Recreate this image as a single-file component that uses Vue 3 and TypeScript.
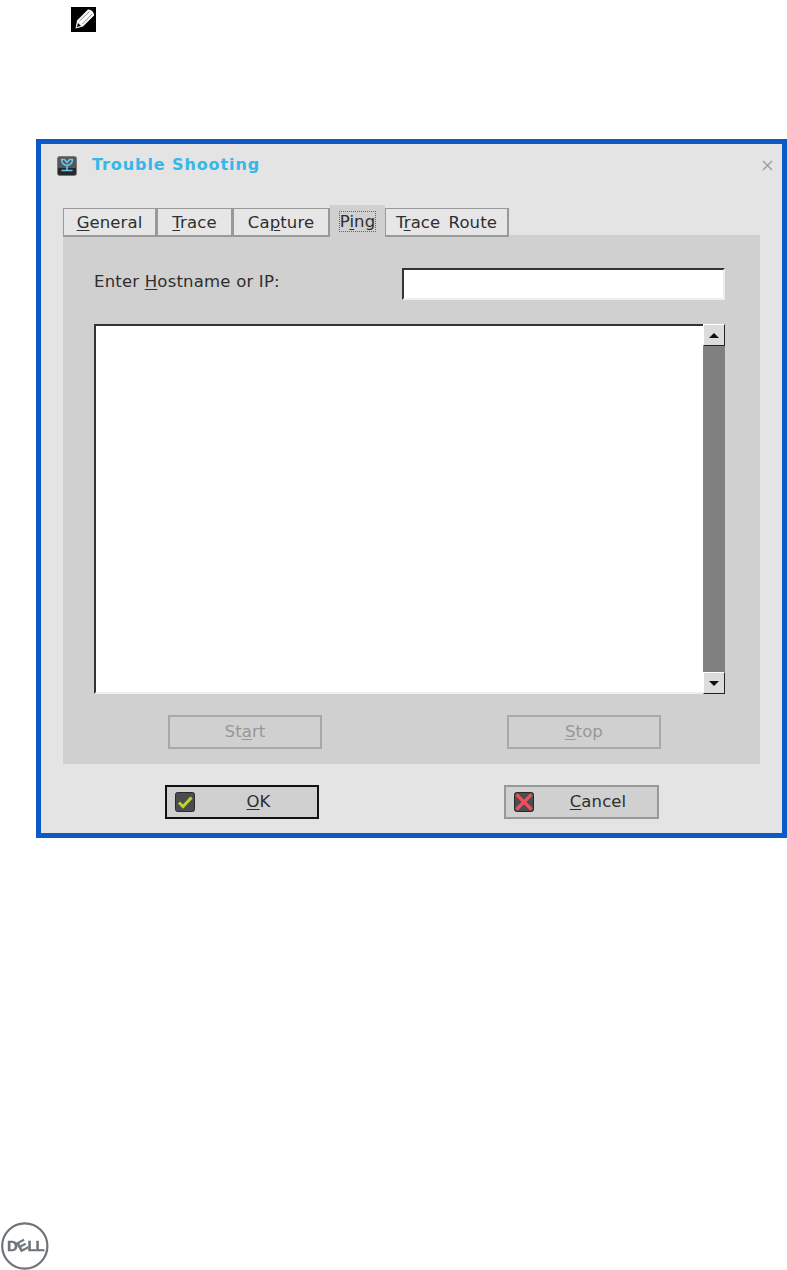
<script setup lang="ts">
interface Tab {
  before: string
  key: string
  after: string
  width: number
  active?: boolean
}

const tabs: Tab[] = [
  { before: '', key: 'G', after: 'eneral', width: 94 },
  { before: '', key: 'T', after: 'race', width: 76 },
  { before: 'Ca', key: 'p', after: 'ture', width: 97 },
  { before: 'P', key: 'i', after: 'ng', width: 55, active: true },
  { before: 'T', key: 'r', after: 'ace Route', width: 124 },
]
</script>

<template>
  <div class="page">
    <div class="note-row">
      <svg class="note-icon" width="25" height="25" viewBox="0 0 25 25">
        <rect width="25" height="25" fill="#000" />
        <path d="M4.5 21.5 L6 13.5 L17 2.5 C20 2 23.5 5.5 23 8.5 L12 19.5 Z" fill="#fff" />
        <path d="M8.5 14 L18.5 4.5 M11.5 17 L21 7" stroke="#8a8a8a" stroke-width="1" />
        <path d="M5.5 20.5 L6.8 15.5 L10.5 19 Z" fill="#000" stroke="#fff" stroke-width="0.6" />
      </svg>
    </div>

    <div class="dialog">
      <div class="titlebar">
        <svg class="app-icon" width="20" height="20" viewBox="0 0 20 20">
          <rect x="0.5" y="0.5" width="19" height="19" rx="2" fill="#55585a" stroke="#777" />
          <path d="M1 12 H19 V17 a2 2 0 0 1 -2 2 H3 a2 2 0 0 1 -2 -2 Z" fill="#26282a" />
          <path d="M4.5 3.5 L7.5 3.5 L10 6.5 L12.5 3.5 L15.5 3.5 C15.5 7 13 9 10 9.5 C7 9 4.5 7 4.5 3.5 Z" fill="none" stroke="#67c6ea" stroke-width="1.5" />
          <path d="M10 9 V14 M4.5 14.5 H15.5" stroke="#67c6ea" stroke-width="1.6" fill="none" />
        </svg>
        <span class="title">Trouble Shooting</span>
        <svg class="close" width="11" height="11" viewBox="0 0 11 11">
          <path d="M1 1 L10 10 M10 1 L1 10" stroke="#9a9a9a" stroke-width="1.4" />
        </svg>
      </div>

      <div class="tabs">
        <div
          v-for="tab in tabs"
          :key="tab.width"
          class="tab"
          :class="{ active: tab.active }"
          :style="{ width: tab.width + 'px' }"
        >
          <span class="tab-label">{{ tab.before }}<u>{{ tab.key }}</u>{{ tab.after }}</span>
        </div>
      </div>

      <div class="panel">
        <div class="host-row">
          <label class="host-label">Enter <u>H</u>ostname or IP:</label>
          <div class="sunken host-input"></div>
        </div>

        <div class="output">
          <div class="sunken output-text"></div>
          <div class="scrollbar">
            <div class="arrow-btn"><span class="arrow up"></span></div>
            <div class="track"></div>
            <div class="arrow-btn"><span class="arrow down"></span></div>
          </div>
        </div>

        <div class="actions">
          <div class="btn disabled">St<u>a</u>rt</div>
          <div class="btn disabled"><u>S</u>top</div>
        </div>
      </div>

      <div class="footer">
        <div class="btn main default">
          <svg class="btn-icon" width="20" height="20" viewBox="0 0 20 20">
            <rect x="0.5" y="0.5" width="19" height="19" rx="2" fill="#4a4c4e" stroke="#2a2a2a" />
            <path d="M4 10.5 L8 14.5 L16.5 5.5" fill="none" stroke="#b8d62c" stroke-width="3" />
          </svg>
          <span class="btn-text"><u>O</u>K</span>
        </div>
        <div class="btn main">
          <svg class="btn-icon" width="20" height="20" viewBox="0 0 20 20">
            <rect x="0.5" y="0.5" width="19" height="19" rx="2" fill="#4a4c4e" stroke="#2a2a2a" />
            <path d="M2.5 2.5 L17.5 17.5 M17.5 2.5 L2.5 17.5" fill="none" stroke="#f04f5c" stroke-width="3.2" />
          </svg>
          <span class="btn-text"><u>C</u>ancel</span>
        </div>
      </div>
    </div>

    <svg class="dell" width="50" height="48" viewBox="0 0 50 48">
      <circle cx="24.8" cy="24" r="22.6" fill="none" stroke="#6f7479" stroke-width="2.2" />
      <g class="dell-text" fill="#6f7479" stroke="#6f7479" stroke-width="0.4">
        <text x="7" y="29">D</text>
        <text x="17.5" y="29" transform="rotate(-28 22 24)">E</text>
        <text x="27.5" y="29">L</text>
        <text x="35.5" y="29">L</text>
      </g>
    </svg>
  </div>
</template>

<style>
html,
body {
  margin: 0;
  background: #fff;
}
</style>

<style scoped>
.page {
  width: 787px;
  height: 1270px;
  display: flex;
  flex-direction: column;
  overflow: hidden;
  box-sizing: border-box;
  font-family: "DejaVu Sans", sans-serif;
  font-size: 16.5px;
  letter-spacing: 0.1px;
  color: #2e2e2e;
  filter: blur(0.4px);
}

.note-row {
  height: 139px;
  padding: 7px 0 0 71px;
  box-sizing: border-box;
}

.note-icon {
  display: block;
}

.dialog {
  width: 751px;
  height: 699px;
  margin-left: 36px;
  box-sizing: border-box;
  border: 5px solid #0c59c8;
  background: #e4e4e4;
}

.titlebar {
  height: 61px;
  display: flex;
  align-items: flex-start;
  padding: 12px 9px 0 16px;
  box-sizing: border-box;
}

.app-icon {
  flex: none;
}

.title {
  margin-left: 15px;
  font-size: 16px;
  line-height: 18px;
  font-weight: bold;
  letter-spacing: 0.9px;
  color: #35b7ea;
}

.close {
  margin: 4px 0 0 auto;
}

.tabs {
  display: flex;
  align-items: flex-end;
  height: 32px;
  margin-left: 22px;
  position: relative;
  z-index: 1;
}

.tab {
  height: 29px;
  box-sizing: border-box;
  display: flex;
  align-items: center;
  justify-content: center;
  background: #e6e6e6;
  border: 2px solid #999;
  border-width: 1px 2px 2px 1px;
  white-space: nowrap;
  word-spacing: 3px;
}

.tab.active {
  height: 32px;
  background: #d0d0d0;
  border: none;
}

.tab.active .tab-label {
  outline: 1px dotted #666;
  line-height: 19px;
}

.panel {
  width: 697px;
  height: 529px;
  margin: -2px 0 0 22px;
  padding: 33px 35px 0 31px;
  box-sizing: border-box;
  background: #d0d0d0;
}

.host-row {
  display: flex;
  align-items: center;
  justify-content: space-between;
  height: 32px;
}

.host-label {
  padding-bottom: 6px;
  letter-spacing: 0.2px;
}

.sunken {
  box-sizing: border-box;
  background: #fff;
  border-style: solid;
  border-width: 2px 2px 2px 2px;
  border-color: #333 #eee #eee #333;
}

.host-input {
  width: 323px;
  height: 32px;
}

.output {
  display: flex;
  height: 370px;
  margin-top: 24px;
}

.output-text {
  flex: 1;
  border-right: none;
}

.scrollbar {
  width: 22px;
  display: flex;
  flex-direction: column;
}

.arrow-btn {
  height: 22px;
  box-sizing: border-box;
  display: flex;
  align-items: center;
  justify-content: center;
  background: #dcdcdc;
  border: 1px solid;
  border-color: #fff #222 #222 #fff;
}

.arrow {
  width: 0;
  height: 0;
  border-left: 5px solid transparent;
  border-right: 5px solid transparent;
}

.arrow.up {
  border-bottom: 5px solid #111;
}

.arrow.down {
  border-top: 5px solid #111;
}

.track {
  flex: 1;
  background: #808080;
}

.actions {
  display: flex;
  justify-content: space-between;
  margin: 21px 64px 0 74px;
}

.btn {
  width: 154px;
  height: 34px;
  box-sizing: border-box;
  display: flex;
  align-items: center;
  justify-content: center;
  padding-bottom: 2px;
  border: 2px solid #999;
  background: #d0d0d0;
}

.btn.disabled {
  color: #979797;
  border-color: #a8a8a8;
}

.footer {
  display: flex;
  justify-content: space-between;
  margin: 21px 0 0 124px;
  width: 494px;
}

.btn.main {
  position: relative;
  color: #2e2e2e;
}

.btn.main:last-child {
  width: 155px;
}

.btn.default {
  border-color: #111;
}

.btn-icon {
  position: absolute;
  left: 8px;
  top: 5px;
}

.btn-text {
  margin-left: 33px;
}

.dell {
  display: block;
  margin: auto 0 0 0;
  flex: none;
}

.dell-text {
  font-family: "Liberation Sans", sans-serif;
  font-weight: bold;
  font-size: 15px;
  letter-spacing: 0;
}

u {
  text-underline-offset: 2px;
}
</style>
